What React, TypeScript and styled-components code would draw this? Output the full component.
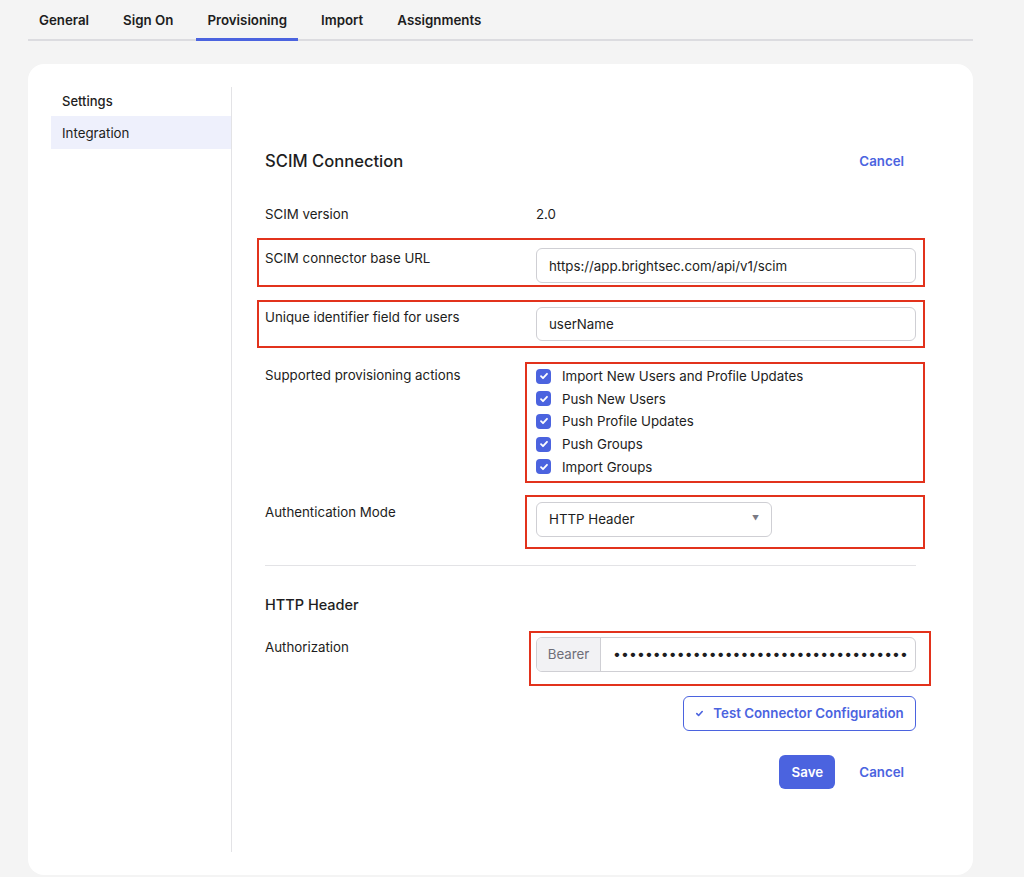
import React from 'react'
import styled, { createGlobalStyle } from 'styled-components'

const GlobalStyle = createGlobalStyle`
  body {
    margin: 0;
    background: #f4f4f4;
    font-family: Inter, "Noto Sans", sans-serif;
    color: #1d1d21;
    -webkit-font-smoothing: antialiased;
  }
  * { box-sizing: border-box; }
`

const BLUE = '#4b63df'
const RED = '#e2321c'
const FS = '13.3px'

const Page = styled.div`
  padding: 0 51px 2px 28px;
`
const Tabs = styled.div`
  display: flex;
  gap: 12px;
  height: 41px;
  border-bottom: 2px solid #dcdce0;
`
const Tab = styled.div<{ $active?: boolean }>`
  padding: 1px 11px 0;
  display: flex;
  align-items: center;
  height: 41px;
  font-size: ${FS};
  font-weight: 600;
  color: #1d1d21;
  border-bottom: 3px solid ${p => (p.$active ? BLUE : 'transparent')};
`
const Card = styled.div`
  margin-top: 23px;
  background: #fff;
  border-radius: 16px;
  height: 811px;
  padding: 23px 57px 23px 23px;
  display: flex;
`
const Sidebar = styled.div`
  width: 181px;
  flex-shrink: 0;
  border-right: 1px solid #e3e3e6;
`
const SideHeading = styled.div`
  padding: 4px 11px 0;
  font-size: 13px;
  font-weight: 500;
  height: 29px;
  line-height: 20px;
`
const SideItem = styled.div<{ $active?: boolean }>`
  height: 33px;
  padding: 0 11px;
  display: flex;
  align-items: center;
  font-size: ${FS};
  background: ${p => (p.$active ? '#eef0fc' : 'transparent')};
`
const Main = styled.div`
  flex: 1;
  min-width: 0;
  padding: 50px 0 0 33px;
  display: flex;
  flex-direction: column;
`
const SectionHeader = styled.div`
  display: flex;
  justify-content: space-between;
  align-items: center;
  height: 48px;
`
const Title = styled.div`
  font-size: 16.6px;
  font-weight: 500;
`
const SubTitle = styled.div`
  font-size: 14.5px;
  font-weight: 500;
  line-height: 20px;
  margin-top: 29px;
`
const LinkButton = styled.button`
  background: none;
  border: none;
  color: ${BLUE};
  font: 600 ${FS} Inter, sans-serif;
  padding: 0 12px;
  height: 34px;
  cursor: pointer;
`
const FieldRow = styled.div<{ $gap?: number }>`
  display: flex;
  min-width: 0;
  margin-top: ${p => p.$gap ?? 24}px;
`
const Label = styled.div`
  width: 271px;
  flex-shrink: 0;
  font-size: ${FS};
  line-height: 20px;
`
const Value = styled.div`
  flex: 1;
  min-width: 0;
  font-size: ${FS};
  line-height: 20px;
`
const Highlight = styled.div<{ $t: number; $r: number; $b: number; $l: number; $row?: boolean }>`
  border: 2px solid ${RED};
  margin: ${p => `-${p.$t}px -${p.$r}px -${p.$b}px -${p.$l}px`};
  padding: ${p => `${p.$t - 2}px ${p.$r - 2}px ${p.$b - 2}px ${p.$l - 2}px`};
  ${p => (p.$row ? 'flex: 1; display: flex; min-width: 0;' : '')}
`
const TextInput = styled.input<{ $h?: number }>`
  width: 100%;
  height: ${p => p.$h ?? 35}px;
  border: 1px solid #cfcfd4;
  border-radius: 6px;
  padding: 0 12px;
  font: ${FS} Inter, sans-serif;
  color: #1d1d21;
  outline: none;
`
const CheckList = styled.div`
  display: flex;
  flex-direction: column;
`
const CheckItem = styled.label`
  display: flex;
  align-items: center;
  gap: 11px;
  height: 22.6px;
  font-size: ${FS};
`
const CheckBox = styled.span`
  width: 15px;
  height: 15px;
  border-radius: 4px;
  background: ${BLUE};
  color: #fff;
  display: flex;
  align-items: center;
  justify-content: center;
`
const Select = styled.div`
  width: 236px;
  height: 35px;
  border: 1px solid #cfcfd4;
  border-radius: 6px;
  padding: 0 12px;
  display: flex;
  align-items: center;
  justify-content: space-between;
  font-size: ${FS};
`
const Caret = styled.span`
  font-size: 7px;
  color: #7a7a84;
`
const Divider = styled.hr`
  border: none;
  border-top: 1px solid #e3e3e6;
  margin: 28px 0 0;
  width: 100%;
`
const InputGroup = styled.div`
  display: flex;
  height: 35px;
  border: 1px solid #cfcfd4;
  border-radius: 6px;
  overflow: hidden;
`
const Addon = styled.div`
  width: 64px;
  flex-shrink: 0;
  background: #f2f2f4;
  border-right: 1px solid #cfcfd4;
  color: #6e6e78;
  font-size: ${FS};
  display: flex;
  align-items: center;
  justify-content: center;
`
const Secret = styled.div`
  flex: 1;
  min-width: 0;
  padding: 0 10px 0 12px;
  display: flex;
  align-items: center;
  font-size: 14px;
  letter-spacing: 0.1px;
  overflow: hidden;
  white-space: nowrap;
`
const Actions = styled.div<{ $gap?: number }>`
  display: flex;
  justify-content: flex-end;
  align-items: center;
  gap: 12px;
  margin-top: ${p => p.$gap ?? 24}px;
`
const OutlineButton = styled.button`
  height: 35px;
  width: 233px;
  border: 1px solid ${BLUE};
  border-radius: 6px;
  background: #fff;
  color: ${BLUE};
  font: 600 ${FS} Inter, sans-serif;
  display: flex;
  align-items: center;
  justify-content: center;
  gap: 9px;
`
const PrimaryButton = styled.button`
  height: 34px;
  width: 56px;
  border: none;
  border-radius: 6px;
  background: ${BLUE};
  color: #fff;
  font: 600 ${FS} Inter, sans-serif;
`

const Check = ({ size = 10 }: { size?: number }) => (
  <svg width={size} height={size} viewBox="0 0 10 10" fill="none">
    <path d="M2 5.2l2 2 4-4.4" stroke="currentColor" strokeWidth="1.8" strokeLinecap="round" strokeLinejoin="round" />
  </svg>
)

const tabs = ['General', 'Sign On', 'Provisioning', 'Import', 'Assignments']
const actions = [
  'Import New Users and Profile Updates',
  'Push New Users',
  'Push Profile Updates',
  'Push Groups',
  'Import Groups',
]

export default function App() {
  return (
    <Page>
      <GlobalStyle />
      <Tabs>
        {tabs.map(t => (
          <Tab key={t} $active={t === 'Provisioning'}>{t}</Tab>
        ))}
      </Tabs>
      <Card>
        <Sidebar>
          <SideHeading>Settings</SideHeading>
          <SideItem $active>Integration</SideItem>
        </Sidebar>
        <Main>
          <SectionHeader>
            <Title>SCIM Connection</Title>
            <LinkButton>Cancel</LinkButton>
          </SectionHeader>
          <FieldRow $gap={19}>
            <Label>SCIM version</Label>
            <Value>2.0</Value>
          </FieldRow>
          <FieldRow $gap={24}>
            <Highlight $t={10} $r={9} $b={4} $l={8} $row>
              <Label>SCIM connector base URL</Label>
              <Value>
                <TextInput readOnly value="https://app.brightsec.com/api/v1/scim" />
              </Value>
            </Highlight>
          </FieldRow>
          <FieldRow>
            <Highlight $t={7} $r={9} $b={7} $l={8} $row>
              <Label>Unique identifier field for users</Label>
              <Value>
                <TextInput readOnly value="userName" $h={34} />
              </Value>
            </Highlight>
          </FieldRow>
          <FieldRow>
            <Label>Supported provisioning actions</Label>
            <Value>
              <Highlight $t={3} $r={9} $b={5} $l={11}>
                <CheckList>
                  {actions.map(a => (
                    <CheckItem key={a}>
                      <CheckBox>
                        <Check />
                      </CheckBox>
                      {a}
                    </CheckItem>
                  ))}
                </CheckList>
              </Highlight>
            </Value>
          </FieldRow>
          <FieldRow>
            <Label>Authentication Mode</Label>
            <Value>
              <Highlight $t={7} $r={9} $b={12} $l={11}>
                <Select>
                  HTTP Header
                  <Caret>▼</Caret>
                </Select>
              </Highlight>
            </Value>
          </FieldRow>
          <Divider />
          <SubTitle>HTTP Header</SubTitle>
          <FieldRow $gap={22}>
            <Label>Authorization</Label>
            <Value>
              <Highlight $t={6} $r={15} $b={14} $l={7}>
                <InputGroup>
                  <Addon>Bearer</Addon>
                  <Secret>{'•'.repeat(37)}</Secret>
                </InputGroup>
              </Highlight>
            </Value>
          </FieldRow>
          <Actions>
            <OutlineButton>
              <Check size={9} />
              Test Connector Configuration
            </OutlineButton>
          </Actions>
          <Actions>
            <PrimaryButton>Save</PrimaryButton>
            <LinkButton>Cancel</LinkButton>
          </Actions>
        </Main>
      </Card>
    </Page>
  )
}
